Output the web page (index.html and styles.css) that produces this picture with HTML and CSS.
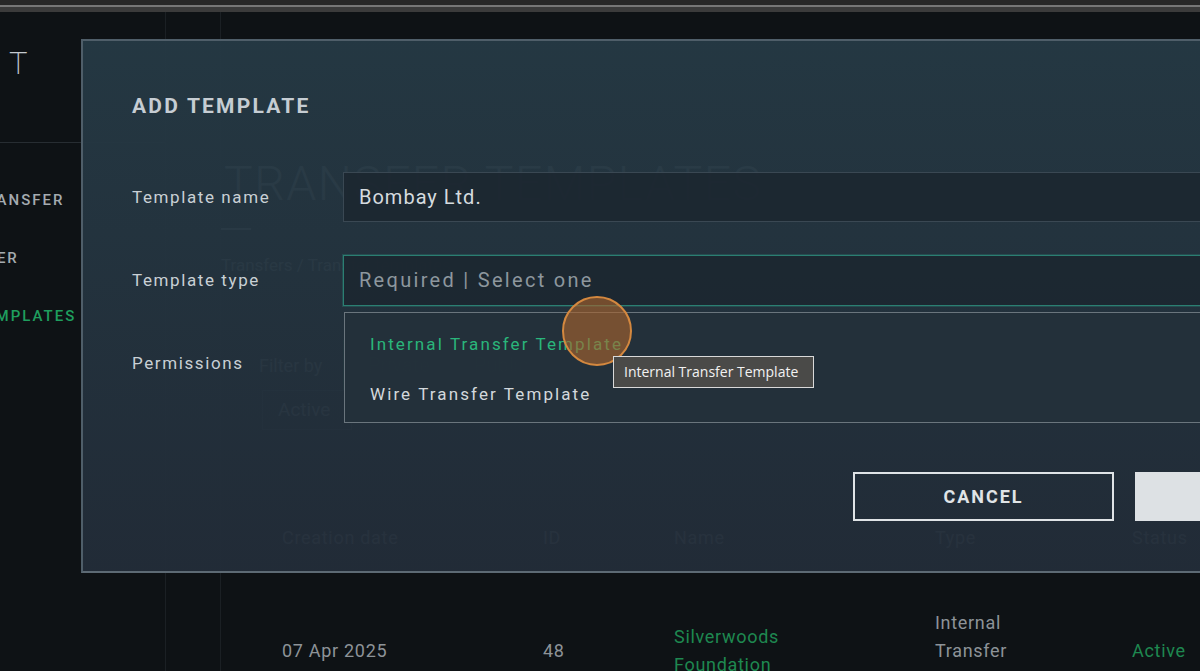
FILE: index.html
```html
<!DOCTYPE html>
<html lang="en">
<head>
    <meta charset="UTF-8">
    <meta name="viewport" content="width=device-width, initial-scale=1.0">
    <title>Transfer templates</title>
    <link rel="stylesheet" href="styles.css">
</head>
<body>
    <div class="topbar"></div>
    <div class="app">
        <aside class="sidebar">
            <div class="logo">T</div>
            <nav class="side-nav">
                <a class="side-link">TRANSFER</a>
                <a class="side-link">USER</a>
                <a class="side-link active">TEMPLATES</a>
            </nav>
        </aside>
        <div class="gutter"></div>
        <main class="content">
            <header class="top-nav">
                <a>DASHBOARD</a>
                <a>ACCOUNTS</a>
                <a class="current">TRANSFERS</a>
                <a>ADMIN</a>
            </header>
            <h1 class="page-title">TRANSFER TEMPLATES</h1>
            <div class="title-rule"></div>
            <div class="crumbs">Transfers / Transfer templates</div>
            <div class="filters">
                <span class="filter-label">Filter by</span>
                <div class="toggle">
                    <span class="toggle-item on">Private</span>
                    <span class="toggle-item">Public</span>
                </div>
            </div>
            <div class="status-box">Active</div>
            <div class="table">
                <div class="t-head">
                    <span class="c-date">Creation date</span>
                    <span class="c-id">ID</span>
                    <span class="c-name">Name</span>
                    <span class="c-type">Type</span>
                    <span class="c-status">Status</span>
                </div>
                <div class="t-row">
                    <span class="c-date">07 Apr 2025</span>
                    <span class="c-id">48</span>
                    <span class="c-name green">Silverwoods Foundation</span>
                    <span class="c-type">Internal Transfer Template</span>
                    <span class="c-status green">Active</span>
                </div>
            </div>
        </main>
    </div>

    <div class="modal">
        <h2 class="modal-title">ADD TEMPLATE</h2>
        <div class="form">
            <label class="f-label">Template name</label>
            <div class="f-input">Bombay Ltd.</div>

            <label class="f-label">Template type</label>
            <div class="f-select">
                <div class="f-input focus placeholder">Required | Select one</div>
                <ul class="dropdown">
                    <li class="opt hover">Internal Transfer Template</li>
                    <li class="opt">Wire Transfer Template</li>
                </ul>
            </div>

            <label class="f-label">Permissions</label>
            <div class="f-perm"></div>
        </div>
        <div class="actions">
            <button class="btn-outline">CANCEL</button>
            <button class="btn-solid">SAVE</button>
        </div>
    </div>

    <div class="click-dot"></div>
    <div class="tip">Internal Transfer Template</div>
</body>
</html>
```

FILE: styles.css
```css
* {
    margin: 0;
    padding: 0;
    box-sizing: border-box;
}
body {
    width: 1200px;
    height: 671px;
    overflow: hidden;
    background-color: #0e1215;
    font-family: Roboto, "Liberation Sans", sans-serif;
    color: #c9d0d5;
    position: relative;
}
.topbar {
    height: 12px;
    background: linear-gradient(#282828 0, #282828 5px, #777 5px, #777 7px, #3b3b3b 7px);
}
.app {
    display: flex;
    height: 659px;
}

/* sidebar */
.sidebar {
    width: 166px;
    border-right: 1px solid #1b2024;
    flex-shrink: 0;
}
.logo {
    height: 131px;
    border-bottom: 1px solid #272d32;
    padding: 33px 0 0 9px;
    font-size: 31px;
    font-weight: 200;
    color: #c4cacf;
}
.side-nav {
    display: flex;
    flex-direction: column;
    padding-top: 28px;
    margin-left: -26px;
}
.side-link {
    line-height: 58px;
    font-size: 15px;
    font-weight: 500;
    letter-spacing: 2px;
    color: #a4abb0;
}
.side-link.active { color: #1f9e5e; }

.gutter {
    width: 55px;
    border-right: 1px solid #1b2024;
    flex-shrink: 0;
}

/* page under the modal */
.content {
    flex: 1;
    min-width: 0;
}
.top-nav {
    display: flex;
    gap: 42px;
    height: 63px;
    padding: 45px 0 0 516px;
    font-size: 15px;
    line-height: 18px;
    font-weight: 700;
    letter-spacing: 1.6px;
    color: #0b1014;
    white-space: nowrap;
}
.page-title {
    margin: 81px 0 0 3px;
    font-size: 48px;
    font-weight: 300;
    letter-spacing: 1.5px;
    color: #aab3b9;
    line-height: 56px;
}
.title-rule {
    width: 30px;
    height: 2px;
    background: #aab3b9;
    margin-top: 16px;
}
.crumbs {
    margin-top: 25px;
    font-size: 17px;
    line-height: 20px;
    color: #aab3b9;
}
.filters {
    display: flex;
    align-items: center;
    margin: 65px 0 0 38px;
}
.filter-label {
    width: 84px;
    font-size: 18px;
    color: #aab3b9;
}
.toggle { display: flex; }
.toggle-item {
    height: 50px;
    line-height: 50px;
    padding: 0 22px;
    font-size: 20px;
    color: #aab3b9;
    background: #2a3641;
}
.toggle-item.on {
    border-left: 3px solid #1f9e5e;
    background: #2f4a45;
}
.status-box {
    margin-left: 41px;
    width: 90px;
    height: 40px;
    line-height: 38px;
    padding-left: 15px;
    font-size: 19px;
    color: #aab3b9;
    border: 1px solid #3a4650;
}
.table { margin-top: 97px; }
.t-head, .t-row {
    display: flex;
    font-size: 18px;
    letter-spacing: 0.7px;
}
.t-head {
    line-height: 21px;
    color: #aab3b9;
}
.t-row {
    margin-top: 61px;
    align-items: center;
    color: #8d9398;
    line-height: 28px;
}
.t-head span, .t-row span { flex-shrink: 0; }
.c-date { width: 322px; padding-left: 61px; }
.c-id { width: 131px; }
.c-name { width: 261px; }
.c-type { width: 197px; }
.c-status { width: 100px; }
.t-row .c-name { padding-right: 120px; }
.t-row .c-type { padding-right: 100px; }
.green { color: #1e8850; }

/* modal */
.modal {
    position: absolute;
    left: 81px;
    top: 39px;
    width: 1366px;
    height: 534px;
    border: 2px solid #4f5e69;
    border-bottom-color: #5d6a74;
    background: linear-gradient(rgba(37, 57, 68, 0.96), rgba(34, 44, 56, 0.965));
    padding: 53px 49px 0 49px;
}
.modal-title {
    font-size: 21px;
    line-height: 24px;
    font-weight: 700;
    letter-spacing: 2.2px;
    color: #c6cdd3;
}
.form {
    display: grid;
    grid-template-columns: 211px 1fr;
    grid-auto-rows: 50px;
    row-gap: 33px;
    margin-top: 54px;
    align-items: center;
}
.f-label {
    font-size: 17px;
    letter-spacing: 1.6px;
    color: #c9d0d5;
}
.f-input {
    height: 50px;
    line-height: 48px;
    padding-left: 15px;
    border: 1px solid #3a4853;
    background: rgba(28, 39, 48, 0.9);
    font-size: 20px;
    letter-spacing: 1px;
    color: #d5dbdf;
}
.f-select { position: relative; }
.f-input.focus {
    height: 51px;
    border-color: #2b7f72;
    box-shadow: 0 0 0 1px rgba(43, 127, 114, 0.35);
}
.f-input.placeholder {
    color: #8d979e;
    font-size: 20px;
    letter-spacing: 2.3px;
}
.dropdown {
    position: absolute;
    left: 1px;
    right: 0;
    top: 57px;
    height: 111px;
    list-style: none;
    padding-top: 6px;
    border: 1px solid #6a757d;
    background: rgba(35, 48, 58, 0.93);
    z-index: 2;
}
.opt {
    height: 50px;
    line-height: 50px;
    padding-left: 25px;
    font-size: 17px;
    letter-spacing: 2.1px;
    color: #d3d8dc;
}
.opt.hover { color: #2ab67b; }

.actions {
    display: flex;
    justify-content: flex-end;
    gap: 21px;
    margin-top: 84px;
}
.actions button {
    width: 261px;
    height: 49px;
    font-family: Roboto, "Liberation Sans", sans-serif;
    font-size: 18px;
    font-weight: 700;
    letter-spacing: 2px;
}
.btn-outline {
    background: transparent;
    border: 2px solid #dfe3e6;
    color: #e0e4e7;
}
.btn-solid {
    background: #dde1e4;
    border: none;
    color: #1d2730;
}

/* recording overlays */
.click-dot {
    position: absolute;
    left: 562px;
    top: 296px;
    width: 70px;
    height: 70px;
    border-radius: 50%;
    border: 2px solid #d4883f;
    background: rgba(170, 100, 45, 0.62);
    z-index: 5;
}
.tip {
    position: absolute;
    left: 613px;
    top: 356px;
    width: 201px;
    height: 32px;
    line-height: 29px;
    padding-left: 10px;
    background: #4a4a48;
    border: 1px solid #d9d9d9;
    font-family: "Open Sans", "Noto Sans", sans-serif;
    font-size: 14px;
    color: #f2f2f2;
    z-index: 6;
}
```
